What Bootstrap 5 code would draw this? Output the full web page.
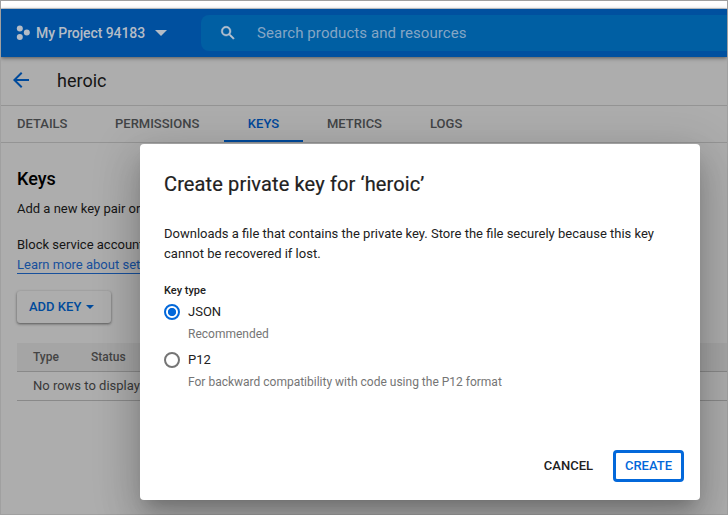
<!DOCTYPE html>
<html lang="en">
<head>
<meta charset="utf-8">
<meta name="viewport" content="width=device-width, initial-scale=1">
<title>Create private key</title>
<link href="https://cdn.jsdelivr.net/npm/bootstrap@5.3.0/dist/css/bootstrap.min.css" rel="stylesheet">
<style>
  body { font-family: Roboto, sans-serif; font-size: 13px; line-height: 20px; background: #adadad; color: #151515; }
  .console { width: 728px; height: 515px; border: 1px solid #a0a0a0; background: #adadad; }
  .window-strip { height: 8px; background: #fff; border-bottom: 1px solid #cfd3d8; }
  .topbar { height: 48px; background: #00509f; color: #b4bcc6; box-shadow: 0 1px 4px rgba(0,0,0,.5); padding-left: 15px; }
  .project { width: 185px; font-size: 14px; font-weight: 500; }
  .project-name { margin-left: 6px; letter-spacing: -.09px; }
  .searchbox { height: 36px; background: #005fa3; border-radius: 8px 0 0 8px; padding-left: 18px; font-size: 15px; color: #85a6c5; }
  .search-text { letter-spacing: .08px; padding-bottom: 1px; }
  .titlebar { height: 49px; border-bottom: 1px solid #949494; padding-left: 12px; font-size: 18px; }
  .titlebar svg { margin: 0 28px 2px 0; }
  .tabs { height: 37px; border-bottom: 1px solid #949494; }
  .tabs .nav-link { height: 36px; padding: 8px 0 0; color: #424446; font-weight: 500; line-height: 20px; border-radius: 0; }
  .tabs .nav-link.active { color: #00479a; border-bottom: 2px solid #004a9b; }
  .tab-details { margin-left: 16px; width: 98px; }
  .tab-perm { width: 109px; }
  .tab-keys { width: 79px; text-align: center; }
  .tab-metrics { margin-left: 24px; width: 103px; }
  .keys-pane { padding: 26px 0 0 16px; }
  .keys-pane h2 { font-size: 18px; font-weight: 500; line-height: 20px; margin: 0 0 10px; color: #000; }
  .help-link { color: #17509c; line-height: 17px; border-bottom: 1px solid #17509c; }
  .add-key { width: 94px; height: 32px; margin-top: 16px; padding: 0 0 0 12px; font-size: 13px; font-weight: 500; color: #004a9b; background: #adadad; border-radius: 3px; box-shadow: 0 1px 3px rgba(0,0,0,.4), 0 1px 2px rgba(0,0,0,.15); }
  .add-key svg { margin-left: 5px; }
  .keys-table { margin-top: 20px; }
  .keys-head { height: 29px; padding-left: 16px; background: #a5a5a5; border-bottom: 1px solid #898989; font-size: 12px; font-weight: 500; color: #444; }
  .keys-head span:first-child { width: 58px; }
  .keys-empty { height: 29px; padding-left: 16px; border-bottom: 1px solid #898989; color: #393939; }
  .key-dialog { left: 140px; top: 144px; width: 560px; height: 356px; padding: 24px; border: 0; border-radius: 4px; background: #fff; color: #212121;
    box-shadow: 0 11px 15px -7px rgba(0,0,0,.2), 0 24px 38px 3px rgba(0,0,0,.14), 0 9px 46px 8px rgba(0,0,0,.12); }
  .key-dialog h1 { font-size: 20px; font-weight: 400; line-height: 32px; letter-spacing: .13px; margin: 0 0 24px; -webkit-text-stroke: .2px #212121; }
  .key-dialog p { margin: 0 0 17px; line-height: 20px; }
  .key-label { font-size: 11px; font-weight: 500; line-height: 20px; margin-bottom: -1px; }
  .key-option { height: 24px; }
  .key-option .form-check-input { width: 16px; height: 16px; margin: 0 8px 0 0; border: 2px solid #757575; background: #fff; box-shadow: none; flex: none; }
  .key-option .form-check-input:checked { border-color: #0368da; background: radial-gradient(circle, #0368da 3.7px, #fff 4.5px); }
  .key-hint { font-size: 12px; line-height: 20px; padding-left: 24px; color: #757575; height: 24px; }
  .dialog-actions { margin: auto -8px -6px 0; gap: 20px; }
  .dialog-actions .btn { font-size: 13px; font-weight: 500; line-height: 20px; padding: 0; border: 0; color: #212121; }
  .dialog-actions .btn-create { width: 71px; height: 32px; border: 3px solid #0368da; border-radius: 4px; color: #0368da; }
</style>
<script src="https://cdn.jsdelivr.net/npm/bootstrap@5.3.0/dist/js/bootstrap.bundle.min.js"></script>
</head>
<body class="overflow-hidden">
<div class="console position-relative overflow-hidden text-nowrap">
  <div class="window-strip"></div>
  <header class="topbar d-flex align-items-center position-relative">
    <div class="project d-flex align-items-center">
      <svg width="14" height="16" viewBox="0 0 14 16" fill="currentColor"><circle cx="3.8" cy="3.4" r="3"/><circle cx="10.8" cy="7.6" r="3"/><circle cx="3.8" cy="12" r="3"/></svg>
      <span class="project-name">My Project 94183</span>
      <svg class="ms-2 ps-0" width="14" height="6" viewBox="-2 0 14 6" fill="currentColor"><path d="M0 0h12L6 6z"/></svg>
    </div>
    <div class="searchbox flex-grow-1 d-flex align-items-center">
      <svg width="18" height="18" viewBox="0 0 24 24" fill="#b9c3cf" stroke="#b9c3cf" stroke-width=".6"><path d="M15.5 14h-.79l-.28-.27A6.47 6.47 0 0 0 16 9.500 6.500 6.500 0 1 0 9.500 16c1.610 0 3.090-.59 4.230-1.570l.27.28v.79l5 4.990L20.490 19l-4.990-5zm-6 0C7.010 14 5 11.990 5 9.500S7.010 5 9.500 5 14 7.010 14 9.500 11.990 14 9.500 14z"/></svg>
      <span class="search-text ms-3 ps-1">Search products and resources</span>
    </div>
  </header>
  <div class="titlebar d-flex align-items-center">
    <svg width="16" height="16" viewBox="4 4 16 16" fill="#004a9b"><path d="M20 11H7.830l5.590-5.590L12 4l-8 8 8 8 1.410-1.410L7.830 13H20z"/></svg>
    <span class="page-name">heroic</span>
  </div>
  <nav class="tabs nav flex-nowrap">
    <a class="nav-link tab-details">DETAILS</a>
    <a class="nav-link tab-perm">PERMISSIONS</a>
    <a class="nav-link tab-keys active">KEYS</a>
    <a class="nav-link tab-metrics">METRICS</a>
    <a class="nav-link">LOGS</a>
  </nav>
  <main class="keys-pane">
    <h2>Keys</h2>
    <div>Add a new key pair or</div>
    <div class="mt-3">Block service account</div>
    <a class="help-link d-inline-block text-decoration-none">Learn more about setting</a>
    <button class="add-key btn border-0 d-flex align-items-center">ADD KEY
      <svg width="8" height="4" viewBox="0 0 8 4" fill="currentColor"><path d="M0 0h8L4 4z"/></svg>
    </button>
    <div class="keys-table">
      <div class="keys-head d-flex align-items-center"><span>Type</span><span>Status</span></div>
      <div class="keys-empty d-flex align-items-center">No rows to display</div>
    </div>
  </main>
</div>
<div class="key-dialog modal-content position-absolute" role="dialog">
  <h1>Create private key for ‘heroic’</h1>
  <p>Downloads a file that contains the private key. Store the file securely because this key<br>cannot be recovered if lost.</p>
  <div class="key-label">Key type</div>
  <label class="key-option d-flex align-items-center"><input class="form-check-input" type="radio" name="keytype" checked>JSON</label>
  <div class="key-hint">Recommended</div>
  <label class="key-option d-flex align-items-center"><input class="form-check-input" type="radio" name="keytype">P12</label>
  <div class="key-hint">For backward compatibility with code using the P12 format</div>
  <div class="dialog-actions d-flex justify-content-end align-items-center">
    <button class="btn">CANCEL</button>
    <button class="btn btn-create">CREATE</button>
  </div>
</div>
</body>
</html>
